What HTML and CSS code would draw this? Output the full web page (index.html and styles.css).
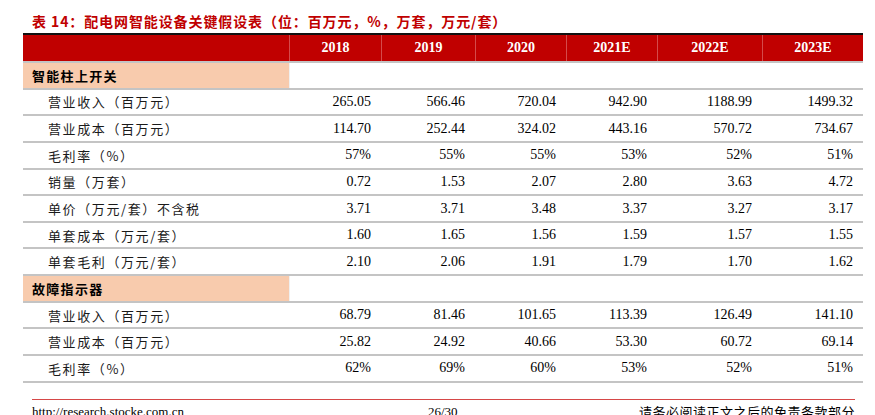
FILE: index.html
```html
<!DOCTYPE html>
<html lang="zh-CN">
<head>
<meta charset="utf-8">
<link rel="stylesheet" href="styles.css">
</head>
<body>
<div class="page">
  <div class="title">表&nbsp;14：配电网智能设备关键假设表（位：百万元，%，万套，万元/套）</div>
  <div class="table">
    <div class="row head">
      <div class="cell"></div>
      <div class="cell">2018</div>
      <div class="cell">2019</div>
      <div class="cell">2020</div>
      <div class="cell">2021E</div>
      <div class="cell">2022E</div>
      <div class="cell">2023E</div>
    </div>
    <div class="row section">
      <div class="cell label">智能柱上开关</div>
      <div class="cell blank"></div>
    </div>
    <div class="row">
      <div class="cell name">营业收入（百万元）</div>
      <div class="cell num">265.05</div><div class="cell num">566.46</div><div class="cell num">720.04</div><div class="cell num">942.90</div><div class="cell num">1188.99</div><div class="cell num">1499.32</div>
    </div>
    <div class="row">
      <div class="cell name">营业成本（百万元）</div>
      <div class="cell num">114.70</div><div class="cell num">252.44</div><div class="cell num">324.02</div><div class="cell num">443.16</div><div class="cell num">570.72</div><div class="cell num">734.67</div>
    </div>
    <div class="row">
      <div class="cell name">毛利率（%）</div>
      <div class="cell num">57%</div><div class="cell num">55%</div><div class="cell num">55%</div><div class="cell num">53%</div><div class="cell num">52%</div><div class="cell num">51%</div>
    </div>
    <div class="row">
      <div class="cell name">销量（万套）</div>
      <div class="cell num">0.72</div><div class="cell num">1.53</div><div class="cell num">2.07</div><div class="cell num">2.80</div><div class="cell num">3.63</div><div class="cell num">4.72</div>
    </div>
    <div class="row">
      <div class="cell name">单价（万元/套）不含税</div>
      <div class="cell num">3.71</div><div class="cell num">3.71</div><div class="cell num">3.48</div><div class="cell num">3.37</div><div class="cell num">3.27</div><div class="cell num">3.17</div>
    </div>
    <div class="row">
      <div class="cell name">单套成本（万元/套）</div>
      <div class="cell num">1.60</div><div class="cell num">1.65</div><div class="cell num">1.56</div><div class="cell num">1.59</div><div class="cell num">1.57</div><div class="cell num">1.55</div>
    </div>
    <div class="row">
      <div class="cell name">单套毛利（万元/套）</div>
      <div class="cell num">2.10</div><div class="cell num">2.06</div><div class="cell num">1.91</div><div class="cell num">1.79</div><div class="cell num">1.70</div><div class="cell num">1.62</div>
    </div>
    <div class="row section">
      <div class="cell label">故障指示器</div>
      <div class="cell blank"></div>
    </div>
    <div class="row">
      <div class="cell name">营业收入（百万元）</div>
      <div class="cell num">68.79</div><div class="cell num">81.46</div><div class="cell num">101.65</div><div class="cell num">113.39</div><div class="cell num">126.49</div><div class="cell num">141.10</div>
    </div>
    <div class="row">
      <div class="cell name">营业成本（百万元）</div>
      <div class="cell num">25.82</div><div class="cell num">24.92</div><div class="cell num">40.66</div><div class="cell num">53.30</div><div class="cell num">60.72</div><div class="cell num">69.14</div>
    </div>
    <div class="row">
      <div class="cell name">毛利率（%）</div>
      <div class="cell num">62%</div><div class="cell num">69%</div><div class="cell num">60%</div><div class="cell num">53%</div><div class="cell num">52%</div><div class="cell num">51%</div>
    </div>
  </div>
  <div class="footer">
    <span class="url">http://research.stocke.com.cn</span>
    <span class="pageno">26/30</span>
    <span class="notice">请务必阅读正文之后的免责条款部分</span>
  </div>
</div>
</body>
</html>
```

FILE: styles.css
```css
html, body {
  margin: 0;
  padding: 0;
  background: #ffffff;
}

.page {
  width: 875px;
  height: 415px;
  overflow: hidden;
  font-family: "Liberation Serif", "Noto Sans CJK SC", serif;
  color: #000;
}

.title {
  margin: 11px 0 0 32px;
  height: 20px;
  line-height: 20px;
  font-family: "Noto Sans CJK SC", sans-serif;
  font-weight: 700;
  font-size: 14px;
  letter-spacing: 0.9px;
  color: #c00000;
  white-space: nowrap;
}

.table {
  margin: 2px 0 0 23px;
  width: 840px;
  border-top: 2px solid #111;
}

.row {
  display: grid;
  grid-template-columns: 266px 92px 94px 91px 91px 105px 101px;
  height: 24.65px;
  border-bottom: 2px solid #c4c4c4;
}

.cell {
  display: flex;
  align-items: center;
  font-size: 14px;
  white-space: nowrap;
}

.head {
  height: 26px;
  background: #c00000;
}

.head .cell {
  justify-content: center;
  color: #fff;
  font-weight: 700;
  border-left: 1px solid #d44a4a;
}

.head .cell:first-child {
  border-left: none;
}

.section .label {
  background: #f8cbad;
  padding-left: 9px;
  font-family: "Noto Sans CJK SC", sans-serif;
  font-weight: 700;
  font-size: 13px;
  letter-spacing: 1.3px;
}

.section .blank {
  grid-column: 2 / 8;
  border-left: 1px solid #f0f0f0;
}

.name {
  padding-left: 25px;
  font-family: "Noto Sans CJK SC", sans-serif;
  font-size: 13px;
  letter-spacing: 1.6px;
  color: #1a1a1a;
}

.num {
  justify-content: flex-end;
  padding-right: 10px;
}

.footer {
  position: relative;
  margin: 16px 0 0 32px;
  width: 823px;
  border-top: 1px solid #d64848;
  padding-top: 4px;
  height: 20px;
  font-size: 13px;
  line-height: 16px;
}

.footer .url {
  position: absolute;
  left: 0;
  top: 4px;
}

.footer .pageno {
  position: absolute;
  left: 396px;
  top: 4px;
}

.footer .notice {
  position: absolute;
  right: 0;
  top: 4px;
  font-family: "Noto Sans CJK SC", sans-serif;
  letter-spacing: 0.5px;
}
```
